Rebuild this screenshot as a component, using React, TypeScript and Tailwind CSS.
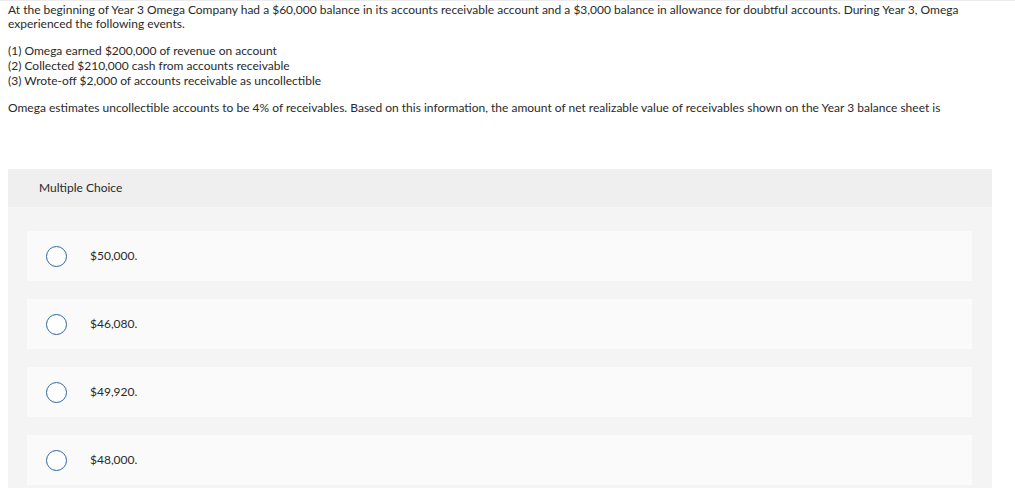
import React from 'react';

const EVENTS = [
  '(1) Omega earned $200,000 of revenue on account',
  '(2) Collected $210,000 cash from accounts receivable',
  '(3) Wrote-off $2,000 of accounts receivable as uncollectible',
];

const CHOICES = ['$50,000.', '$46,080.', '$49,920.', '$48,000.'];

export default function App() {
  return (
    <div className="min-h-screen bg-white text-[#2a2a2a] font-['Lato',sans-serif] text-[12px] leading-[14px]">
      <div className="h-[3px] border-t border-[#ececec]" />

      {/* Question */}
      <div className="px-2">
        <p>
          At the beginning of Year 3 Omega Company had a $60,000 balance in its accounts receivable account and a $3,000
          balance in allowance for doubtful accounts. During Year 3, Omega experienced the following events.
        </p>
        <div className="mt-[12px] leading-[15px]">
          {EVENTS.map((e) => (
            <div key={e}>{e}</div>
          ))}
        </div>
        <p className="mt-[13px]">
          Omega estimates uncollectible accounts to be 4% of receivables. Based on this information, the amount of net
          realizable value of receivables shown on the Year 3 balance sheet is
        </p>
      </div>

      {/* Answer panel */}
      <div className="mt-[54px] ml-2 w-[984px] bg-[#f4f4f4]">
        <div className="h-[38px] bg-[#efefef] flex items-center pl-[31px]">Multiple Choice</div>
        <div className="flex flex-col gap-[18px] pt-[24px] pl-[19px] pr-[20px] pb-[3px]">
          {CHOICES.map((c) => (
            <div key={c} className="h-[50px] bg-[#fafafa] flex items-center">
              <span className="ml-[19px] w-[21px] h-[21px] rounded-full border-[1.5px] border-[#2f64a0] bg-white" />
              <span className="ml-[23px]">{c}</span>
            </div>
          ))}
        </div>
      </div>
    </div>
  );
}
